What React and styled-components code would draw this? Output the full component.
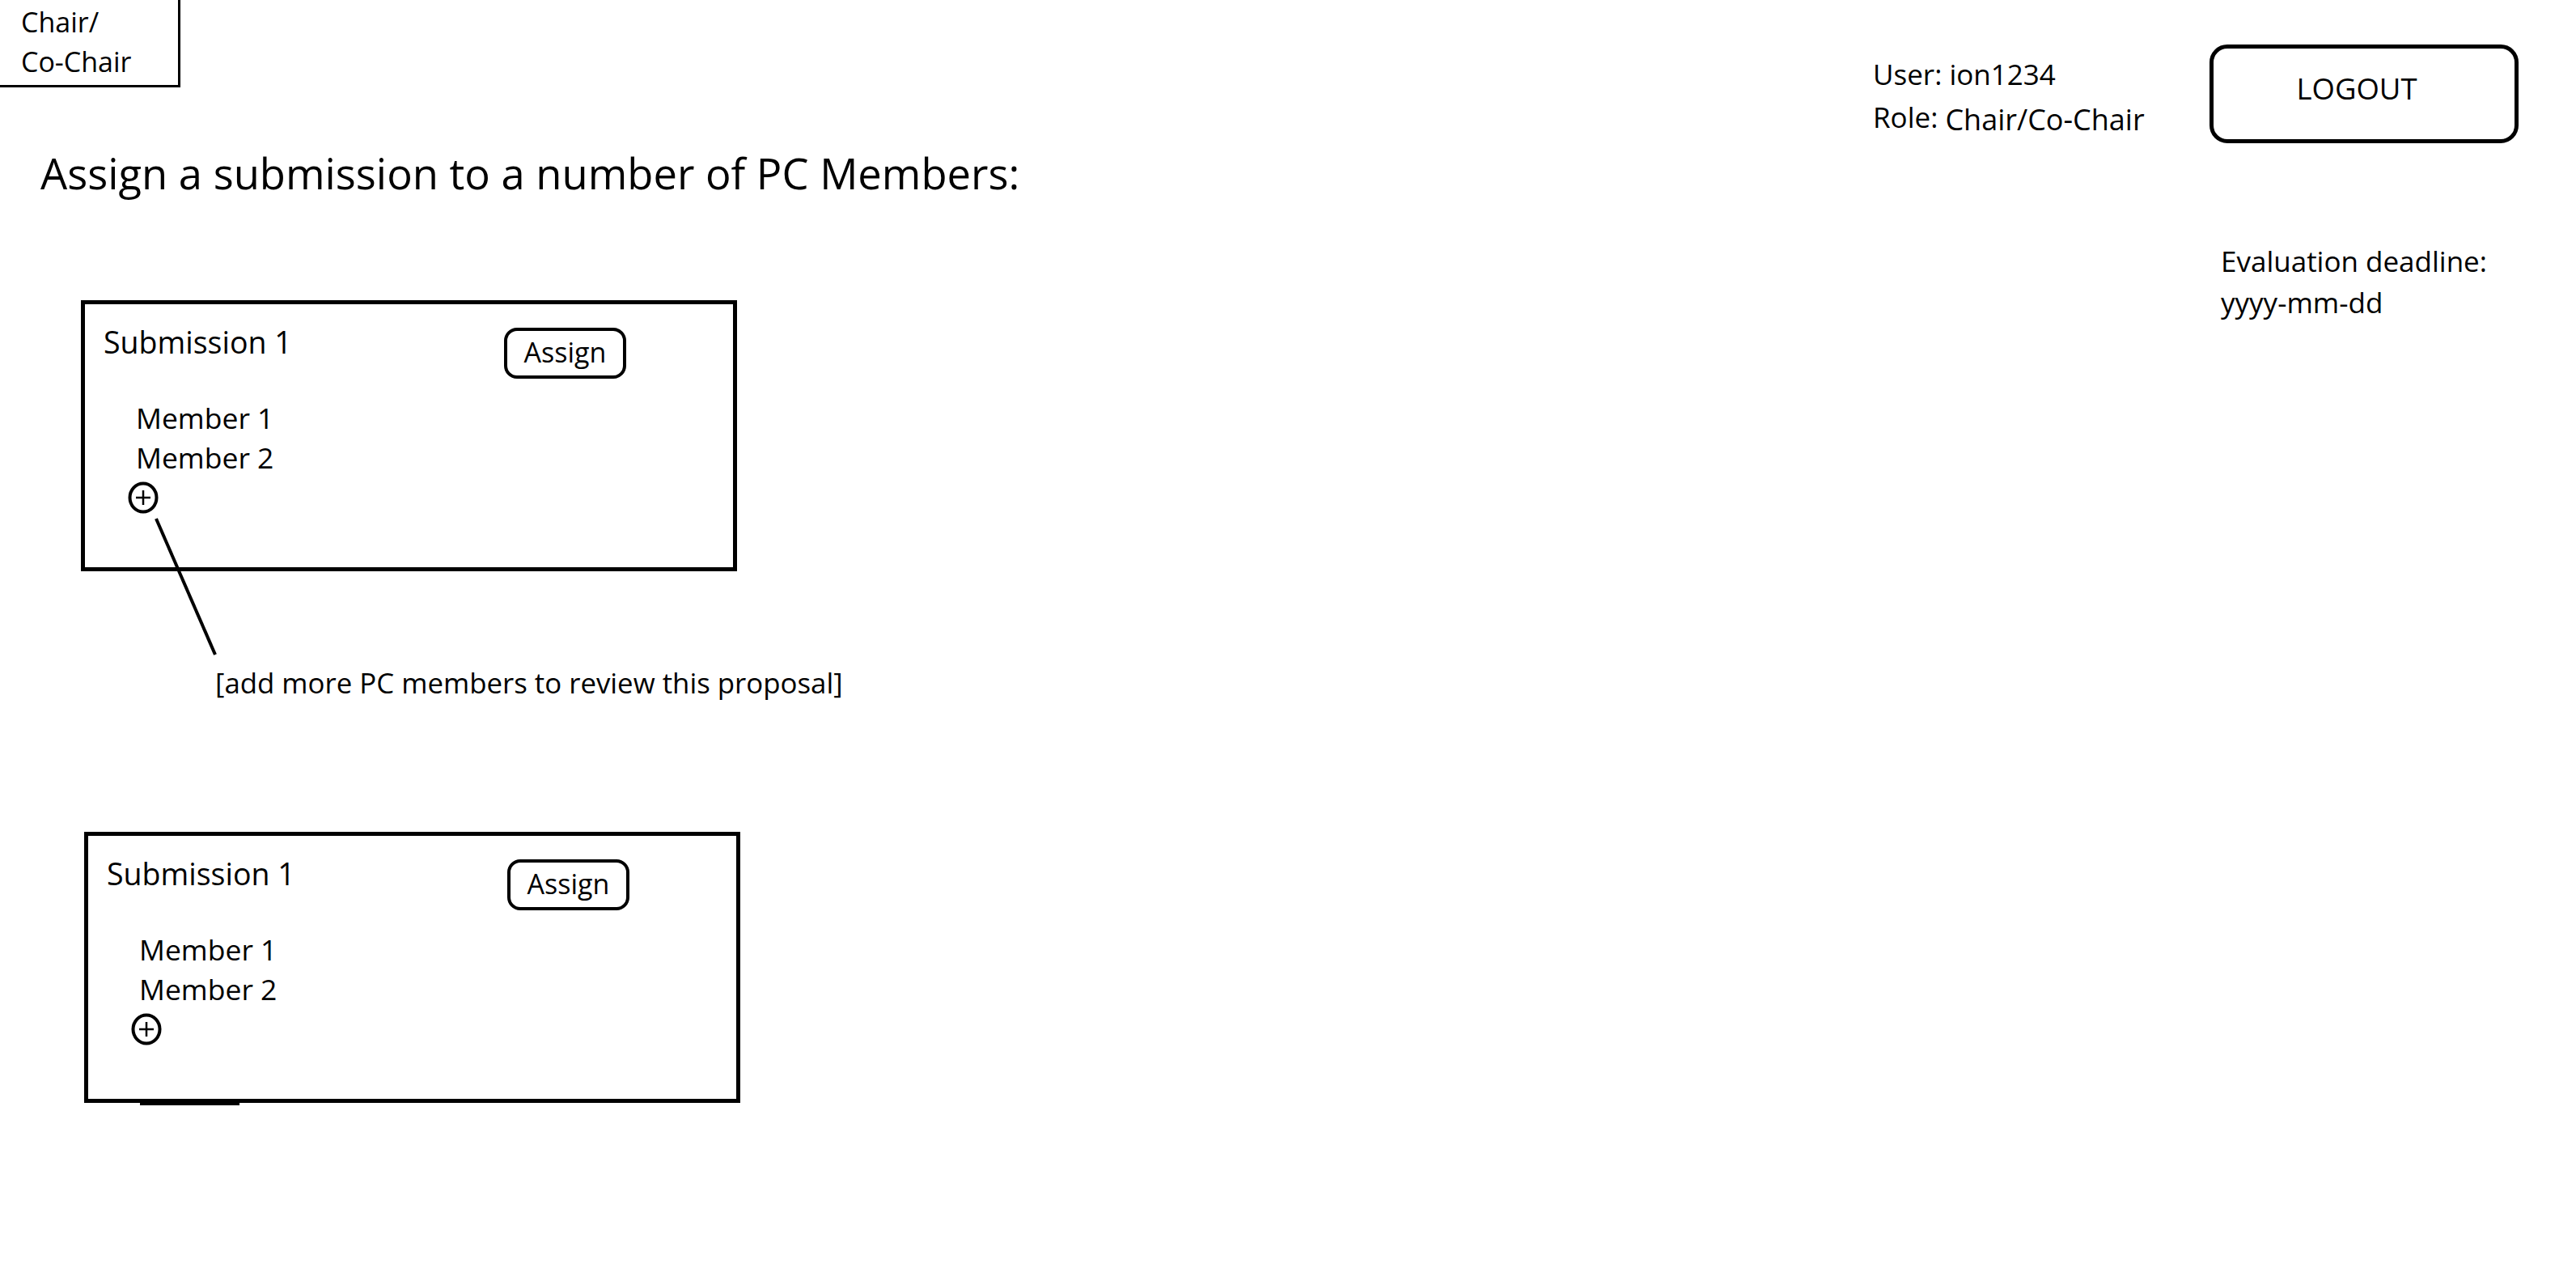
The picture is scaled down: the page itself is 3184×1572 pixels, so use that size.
import React from 'react';
import styled, { createGlobalStyle } from 'styled-components';

const GlobalStyle = createGlobalStyle`
    html, body {
        margin:0;
        padding:0;
        background:#FFF;
    }
    body{
        font-family:"Open Sans", "Noto Sans", sans-serif;
        color:#000;
    }
    #root{
        min-height:100vh;
    }
`;

const Page = styled.div`
    box-sizing:border-box;
    width:100%;
    min-height:100vh;
    padding-right:71px;
    display:flex;
    flex-direction:column;
`;

const TopBar = styled.header`
    display:flex;
    justify-content:space-between;
    align-items:flex-start;
`;

const RoleTag = styled.div`
    box-sizing:border-box;
    width:223px;
    height:108px;
    border-right:3px solid #000;
    border-bottom:3px solid #000;
    padding:3px 0 0 26px;
    font-size:34px;
    line-height:49px;
`;

const AccountArea = styled.div`
    display:flex;
    margin-top:55px;
`;

const UserInfo = styled.div`
    width:416px;
    padding-top:10px;
    font-size:35px;
    line-height:53px;
`;

const RoleValue = styled.span`
    font-size:36px;
    vertical-align:-3px;
`;

const LogoutButton = styled.button`
    box-sizing:border-box;
    width:382px;
    height:122px;
    border:5px solid #000;
    border-radius:22px;
    background:#FFF;
    color:#000;
    font-family:inherit;
    font-size:36.5px;
    display:flex;
    align-items:center;
    justify-content:center;
    padding:0 18px 14px 0;
    cursor:pointer;
`;

const Content = styled.div`
    display:flex;
    align-items:flex-start;
`;

const Main = styled.main`
    flex:1;
    padding-left:50px;
`;

const Heading = styled.h1`
    margin:2px 0 0;
    font-size:52.5px;
    font-weight:400;
    line-height:70px;
`;

const Card = styled.section`
    position:relative;
    box-sizing:border-box;
    width:811px;
    height:335px;
    border:5px solid #000;
    padding:24px 23px;
    margin-top:${p => p.$top}px;
    margin-left:${p => p.$offset}px;
    &::after{
        content:'';
        display:${p => p.$tail ? 'block' : 'none'};
        position:absolute;
        left:64px;
        bottom:-8px;
        width:123px;
        height:3px;
        background:#000;
    }
`;

const CardHeader = styled.div`
    display:grid;
    grid-template-columns:495px auto;
    align-items:start;
`;

const CardTitle = styled.h2`
    margin:0;
    font-size:37.5px;
    font-weight:400;
    line-height:46px;
`;

const AssignButton = styled.button`
    box-sizing:border-box;
    justify-self:start;
    margin-top:5px;
    width:151px;
    height:63px;
    border:4px solid #000;
    border-radius:16px;
    background:#FFF;
    color:#000;
    font-family:inherit;
    font-size:34px;
    display:flex;
    align-items:center;
    justify-content:center;
    padding:0 0 4px;
    cursor:pointer;
`;

const MemberList = styled.ul`
    list-style:none;
    margin:24px 0 0;
    padding:0 0 0 40px;
    font-size:35.5px;
    line-height:49px;
`;

const AddRow = styled.div`
    position:relative;
    margin:5px 0 0 30px;
    width:38px;
    height:40px;
`;

const AddButton = styled.button`
    display:block;
    width:38px;
    height:40px;
    padding:0;
    border:none;
    background:none;
    cursor:pointer;
`;

const Leader = styled.svg`
    position:absolute;
    left:0;
    top:0;
    overflow:visible;
    pointer-events:none;
`;

const Annotation = styled.p`
    margin:115px 0 0 216px;
    font-size:34.8px;
    line-height:46px;
`;

const Aside = styled.aside`
    width:368px;
    padding:120px 0 0 14px;
    font-size:35px;
    line-height:51px;
`;

const PlusIcon = () => (
    <svg width="38" height="40" viewBox="0 0 38 40">
        <ellipse cx="19" cy="20" rx="16.5" ry="17.5" fill="none" stroke="#000" strokeWidth="4" />
        <line x1="10" y1="20" x2="28" y2="20" stroke="#000" strokeWidth="2.5" />
        <line x1="19" y1="11" x2="19" y2="29" stroke="#000" strokeWidth="2.5" />
    </svg>
);

const members = ['Member 1', 'Member 2'];

const SubmissionCard = ({ top, offset, tail, leader }) => (
    <Card $top={top} $offset={offset} $tail={tail}>
        <CardHeader>
            <CardTitle>Submission 1</CardTitle>
            <AssignButton>Assign</AssignButton>
        </CardHeader>
        <MemberList>
            {members.map(m => <li key={m}>{m}</li>)}
        </MemberList>
        <AddRow>
            <AddButton aria-label="Add PC member"><PlusIcon /></AddButton>
            {leader ? (
                <Leader width="120" height="220">
                    <line x1="35" y1="46" x2="108" y2="214" stroke="#000" strokeWidth="4" />
                </Leader>
            ) : null}
        </AddRow>
    </Card>
);

const App = () => {
    return (
        <>
            <GlobalStyle />
            <Page>
                <TopBar>
                    <RoleTag>
                        Chair/<br />Co-Chair
                    </RoleTag>
                    <AccountArea>
                        <UserInfo>
                            <div>User: ion1234</div>
                            <div>Role: <RoleValue>Chair/Co-Chair</RoleValue></div>
                        </UserInfo>
                        <LogoutButton>LOGOUT</LogoutButton>
                    </AccountArea>
                </TopBar>
                <Content>
                    <Main>
                        <Heading>Assign a submission to a number of PC Members:</Heading>
                        <SubmissionCard top={122} offset={50} leader />
                        <Annotation>[add more PC members to review this proposal]</Annotation>
                        <SubmissionCard top={161} offset={54} tail />
                    </Main>
                    <Aside>
                        Evaluation deadline:<br />yyyy-mm-dd
                    </Aside>
                </Content>
            </Page>
        </>
    );
};

export default App;
